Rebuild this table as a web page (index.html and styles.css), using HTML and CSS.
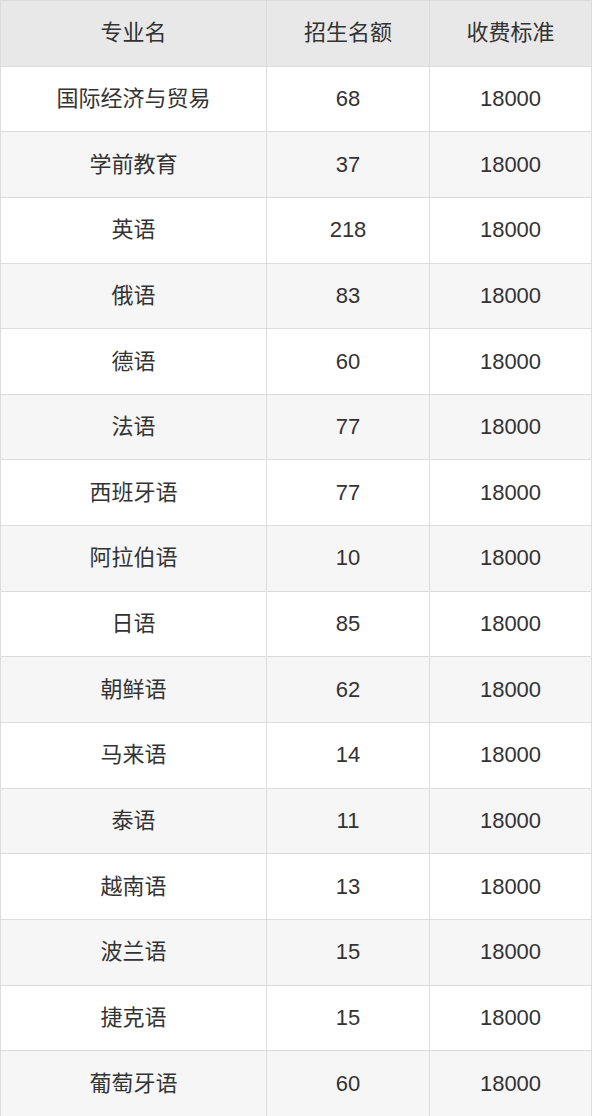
FILE: index.html
```html
<!DOCTYPE html>
<html lang="zh">
<head>
<meta charset="utf-8">
<link rel="stylesheet" href="styles.css">
</head>
<body>
<table class="tbl">
<colgroup><col class="c1"><col class="c2"><col class="c3"></colgroup>
<thead>
<tr><th>专业名</th><th>招生名额</th><th>收费标准</th></tr>
</thead>
<tbody>
<tr><td>国际经济与贸易</td><td>68</td><td>18000</td></tr>
<tr><td>学前教育</td><td>37</td><td>18000</td></tr>
<tr><td>英语</td><td>218</td><td>18000</td></tr>
<tr><td>俄语</td><td>83</td><td>18000</td></tr>
<tr><td>德语</td><td>60</td><td>18000</td></tr>
<tr><td>法语</td><td>77</td><td>18000</td></tr>
<tr><td>西班牙语</td><td>77</td><td>18000</td></tr>
<tr><td>阿拉伯语</td><td>10</td><td>18000</td></tr>
<tr><td>日语</td><td>85</td><td>18000</td></tr>
<tr><td>朝鲜语</td><td>62</td><td>18000</td></tr>
<tr><td>马来语</td><td>14</td><td>18000</td></tr>
<tr><td>泰语</td><td>11</td><td>18000</td></tr>
<tr><td>越南语</td><td>13</td><td>18000</td></tr>
<tr><td>波兰语</td><td>15</td><td>18000</td></tr>
<tr><td>捷克语</td><td>15</td><td>18000</td></tr>
<tr><td>葡萄牙语</td><td>60</td><td>18000</td></tr>
</tbody>
</table>
</body>
</html>
```
FILE: styles.css
```css
html, body {
  margin: 0;
  padding: 0;
  background: #fff;
}
.tbl {
  width: 591px;
  border-collapse: collapse;
  table-layout: fixed;
  font-family: "Liberation Sans", "Noto Sans CJK SC", sans-serif;
  font-size: 22px;
  line-height: 26px;
  color: #333;
}
.c1 { width: 266px; }
.c2 { width: 163px; }
.c3 { width: 162px; }
.tbl th, .tbl td {
  border: 1px solid #dcdcdc;
  text-align: center;
  vertical-align: middle;
  height: 64.65px;
  padding: 0;
  font-weight: normal;
}
.tbl th {
  background: #e8e8e8;
}
.tbl tbody tr:nth-child(even) td {
  background: #f6f6f6;
}
```
